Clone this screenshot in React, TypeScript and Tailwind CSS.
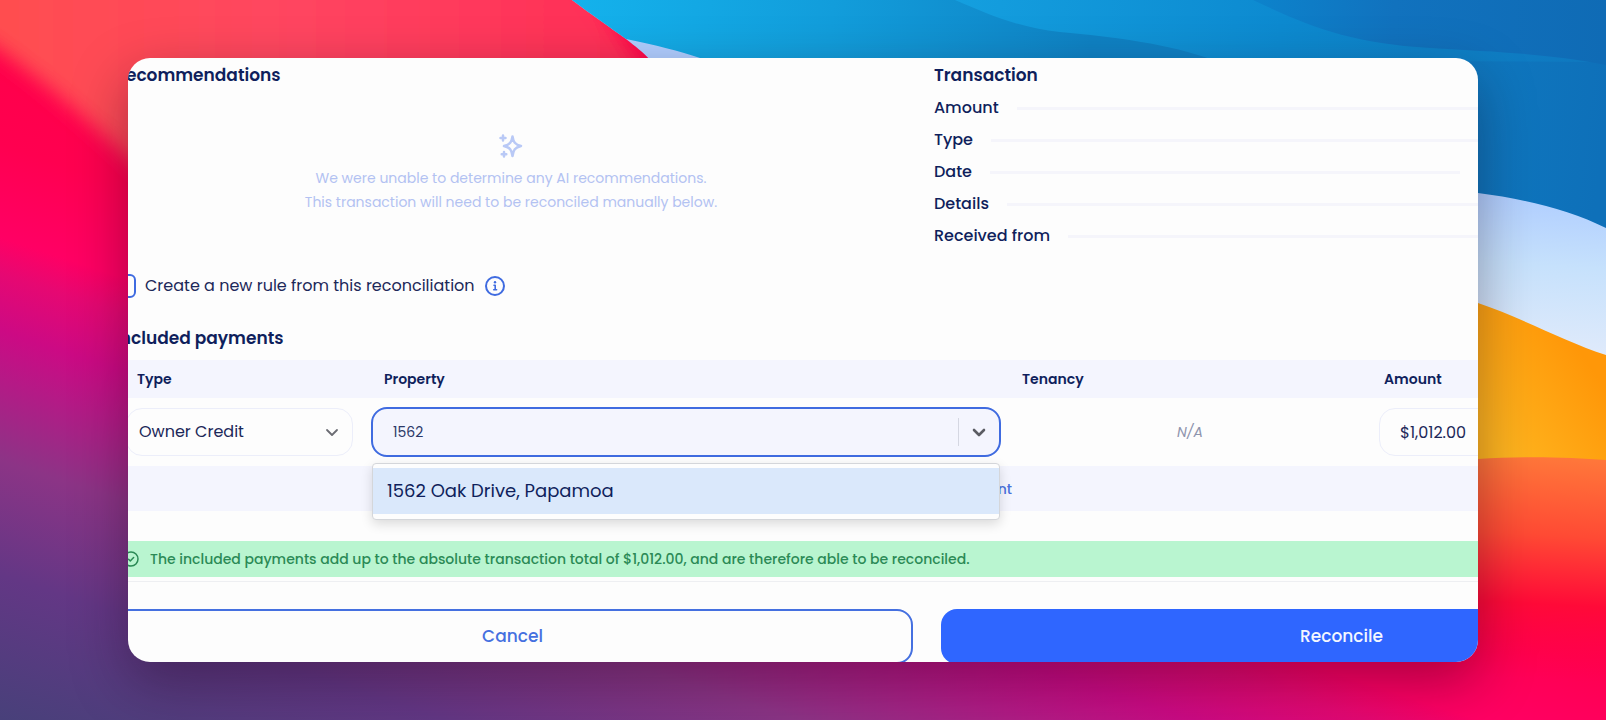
import { useState } from 'react'

const TRANSACTION_FIELDS = [
  { label: 'Amount', short: false },
  { label: 'Type', short: false },
  { label: 'Date', short: true },
  { label: 'Details', short: false },
  { label: 'Received from', short: false },
]

const PROPERTIES = ['1562 Oak Drive, Papamoa']

function Wallpaper() {
  return (
    <svg
      className="absolute inset-0 h-full w-full"
      viewBox="0 0 1606 720"
      preserveAspectRatio="none"
      aria-hidden="true"
    >
      <defs>
        <linearGradient id="base" gradientUnits="userSpaceOnUse" x1="0" y1="0" x2="-212" y2="650">
          <stop offset="0" stopColor="#ff0046" />
          <stop offset="0.2" stopColor="#ff0050" />
          <stop offset="0.33" stopColor="#ff0064" />
          <stop offset="0.38" stopColor="#e60872" />
          <stop offset="0.46" stopColor="#cc0a84" />
          <stop offset="0.53" stopColor="#b41a86" />
          <stop offset="0.64" stopColor="#8c3486" />
          <stop offset="0.8" stopColor="#633785" />
          <stop offset="1" stopColor="#48407a" />
        </linearGradient>
        <linearGradient id="coral" x1="0" y1="0" x2="1" y2="0">
          <stop offset="0" stopColor="#ff504c" />
          <stop offset="0.5" stopColor="#ff4560" />
          <stop offset="1" stopColor="#ff2c56" />
        </linearGradient>
        <linearGradient id="sea" gradientUnits="userSpaceOnUse" x1="572" y1="0" x2="1606" y2="120">
          <stop offset="0" stopColor="#14b2ec" />
          <stop offset="0.25" stopColor="#129ddb" />
          <stop offset="0.5" stopColor="#0f82c4" />
          <stop offset="0.8" stopColor="#0f7bc2" />
          <stop offset="1" stopColor="#0e70b9" />
        </linearGradient>
        <linearGradient id="wave" gradientUnits="userSpaceOnUse" x1="955" y1="0" x2="1606" y2="60">
          <stop offset="0" stopColor="#149fdf" />
          <stop offset="0.5" stopColor="#0d8ad0" />
          <stop offset="1" stopColor="#0f77be" />
        </linearGradient>
        <linearGradient id="deep" gradientUnits="userSpaceOnUse" x1="1253" y1="0" x2="1606" y2="20">
          <stop offset="0" stopColor="#0c83cc" />
          <stop offset="0.4" stopColor="#1172be" />
          <stop offset="1" stopColor="#0f6bb5" />
        </linearGradient>
        <linearGradient id="ice" gradientUnits="userSpaceOnUse" x1="1540" y1="195" x2="1530" y2="350">
          <stop offset="0" stopColor="#b0ceff" />
          <stop offset="0.45" stopColor="#c6e1fc" />
          <stop offset="1" stopColor="#dfeafb" />
        </linearGradient>
        <linearGradient id="amber" gradientUnits="userSpaceOnUse" x1="1500" y1="450" x2="1600" y2="380">
          <stop offset="0" stopColor="#ffb51f" />
          <stop offset="1" stopColor="#ff9708" />
        </linearGradient>
        <linearGradient id="ember" gradientUnits="userSpaceOnUse" x1="1560" y1="458" x2="1548" y2="680">
          <stop offset="0" stopColor="#ff773a" />
          <stop offset="0.35" stopColor="#ff4a34" />
          <stop offset="0.66" stopColor="#ff0a38" />
          <stop offset="1" stopColor="#ff0046" stopOpacity="0" />
        </linearGradient>
        <filter id="soft" x="-20%" y="-20%" width="140%" height="140%">
          <feGaussianBlur stdDeviation="10" />
        </filter>
      </defs>
      <rect width="1606" height="720" fill="url(#base)" />
      <path
        d="M-60 -60H560L650 80L400 400L200 232C170 196 90 116 0 50L-60 10Z"
        fill="url(#coral)"
        filter="url(#soft)"
      />
      <path d="M572 0C592 15 611 28 626 39C636 47 642 51 650 60V400H1606V0Z" fill="url(#ice)" />
      <path d="M572 0C592 15 611 28 626 39C655 45 680 51 700 58L1100 193H1478C1525 199 1570 210 1606 228V0Z" fill="url(#sea)" />
      <path d="M955 0C990 15 1020 28 1060 32C1115 37 1170 44 1213 60L1606 62V0Z" fill="url(#wave)" />
      <path d="M1253 0C1310 27 1350 43 1430 48C1500 52 1550 54 1606 65V0Z" fill="url(#deep)" />
      <path d="M1400 280L1478 303C1520 317 1565 342 1606 355V480H1400Z" fill="url(#amber)" />
      <path d="M1400 462L1478 459C1520 456 1570 457 1606 460V720H1400Z" fill="url(#ember)" />
    </svg>
  )
}

function Sparkles() {
  return (
    <svg className="size-6 text-[#b9c9f6]" viewBox="0 0 24 24" fill="none" stroke="currentColor" strokeWidth="2.5" strokeLinecap="round" strokeLinejoin="round" aria-hidden="true">
      <path d="M13.5 2.5C14.3 8 16 10.5 22 12C16 13.5 14.3 16 13.5 22C12.7 16 11 13.5 5 12C11 10.5 12.7 8 13.5 2.5Z" />
      <path d="M4 1.5V6.5M1.5 4H6.5M5 18V22.5M2.7 20.2H7.3" />
    </svg>
  )
}

function InfoIcon() {
  return (
    <svg className="size-5 text-[#3f6be0]" viewBox="0 0 20 20" fill="none" stroke="currentColor" strokeWidth="2" strokeLinecap="round" strokeLinejoin="round" aria-hidden="true">
      <circle cx="10" cy="10" r="9" />
      <path d="M9 9.3H10.2V13.8M8.7 13.8H11.6" strokeWidth="1.6" />
      <circle cx="10" cy="6.2" r="1.2" fill="currentColor" stroke="none" />
    </svg>
  )
}

function Chevron({ className }: { className: string }) {
  return (
    <svg className={className} viewBox="0 0 14 9" fill="none" stroke="currentColor" strokeLinecap="round" strokeLinejoin="round" aria-hidden="true">
      <path d="M2 2L7 7L12 2" />
    </svg>
  )
}

function CheckCircle() {
  return (
    <svg className="size-4 shrink-0" viewBox="0 0 16 16" fill="none" stroke="currentColor" strokeWidth="1.5" strokeLinecap="round" strokeLinejoin="round" aria-hidden="true">
      <circle cx="8" cy="8" r="7" />
      <path d="M5.5 8.2L7.3 9.9L10.6 6.5" />
    </svg>
  )
}

function PropertyPicker() {
  const [query, setQuery] = useState('1562')
  const matches = PROPERTIES.filter((p) => p.startsWith(query))

  return (
    <div className="relative">
      <div className="flex h-[50px] items-center rounded-2xl border-2 border-[#3f6be0] bg-[#f4f5fe]">
        <input
          aria-label="Property"
          role="combobox"
          aria-expanded="true"
          aria-controls="property-options"
          className="min-w-0 flex-1 bg-transparent pl-5 text-sm text-[#2b3868] outline-none"
          value={query}
          onChange={(e) => setQuery(e.target.value)}
        />
        <span className="h-7 w-px bg-[#d5d7e2]" />
        <button type="button" aria-label="Show properties" className="flex h-full w-10 items-center justify-center">
          <Chevron className="h-[9px] w-3.5 stroke-[2.6] text-[#5b5c63]" />
        </button>
      </div>
      <ul
        id="property-options"
        role="listbox"
        aria-label="Properties"
        className="absolute inset-x-px top-14 z-10 rounded border border-[#d4d6da] bg-[#fdfdfd] pt-1 pb-[5px] shadow-[0_4px_12px_rgba(0,0,0,0.14)]"
      >
        {matches.map((name) => (
          <li key={name} role="option" aria-selected="true" className="flex h-[46px] items-center bg-[#dae8fb] px-3.5 text-lg">
            {name}
          </li>
        ))}
      </ul>
    </div>
  )
}

function PaymentsTable() {
  return (
    <table className="mt-1.5 w-full table-fixed border-collapse">
      <colgroup>
        <col className="w-[250px]" />
        <col className="w-[648px]" />
        <col className="w-[360px]" />
        <col />
      </colgroup>
      <thead>
        <tr className="h-[38px] bg-[#f4f5fe] text-left text-sm">
          <th className="pl-[25px] font-semibold">Type</th>
          <th className="pl-[22px] font-semibold">Property</th>
          <th className="pl-3 font-semibold">Tenancy</th>
          <th className="pl-3.5 font-semibold">Amount</th>
        </tr>
      </thead>
      <tbody>
        <tr className="h-[68px]">
          <td className="pr-[9px] pl-3.5">
            <div className="relative">
              <select
                aria-label="Payment type"
                className="h-12 w-full appearance-none rounded-2xl border border-[#eceefa] bg-transparent px-3 text-base text-[#1c2859]"
              >
                <option>Owner Credit</option>
              </select>
              <Chevron className="pointer-events-none absolute top-5 right-3.5 h-[9px] w-3.5 stroke-[1.8] text-[#6b6c73]" />
            </div>
          </td>
          <td className="px-[9px]">
            <PropertyPicker />
          </td>
          <td className="text-center text-sm text-[#8e94ad] italic">N/A</td>
          <td className="px-[9px]">
            <input
              aria-label="Amount"
              className="h-12 w-full rounded-2xl border border-[#eceefa] bg-transparent px-5 text-base text-[#1c2859]"
              defaultValue="$1,012.00"
            />
          </td>
        </tr>
        <tr className="h-[45px] bg-[#f4f5fe]">
          <td colSpan={4} className="text-center">
            <button type="button" className="text-sm font-medium text-[#4a72dd]">
              + Add another payment
            </button>
          </td>
        </tr>
      </tbody>
    </table>
  )
}

export default function App() {
  return (
    <div className="relative min-h-screen overflow-hidden px-32 py-[58px] font-['Poppins','Inter',sans-serif] text-[#0f1f5c]">
      <Wallpaper />
      <main className="relative overflow-hidden rounded-[22px] bg-[#fdfdfd] shadow-[0_20px_56px_rgba(20,0,20,0.36)]">
        {/* the dialog is wider than its frame and runs off both sides */}
        <div className="-mr-[264px] -ml-4 pt-px">
          <div className="grid grid-cols-[79fr_80fr] gap-6">
            <section>
              <h2 className="pl-[3px] text-[17px] leading-8 font-semibold">Recommendations</h2>
              <div className="flex flex-col items-center pt-[43px] text-center text-sm leading-6 text-[#b3c2f2]">
                <Sparkles />
                <p className="mt-2">We were unable to determine any AI recommendations.</p>
                <p>This transaction will need to be reconciled manually below.</p>
              </div>
            </section>
            <section>
              <h2 className="text-[17px] leading-8 font-semibold">Transaction</h2>
              <dl className="pt-px">
                {TRANSACTION_FIELDS.map((field) => (
                  <div key={field.label} className="flex h-8 items-center gap-[18px] text-base font-medium">
                    <dt>{field.label}</dt>
                    <dd className={field.short ? 'mr-[282px] h-[3px] flex-1 bg-[#f5f5fb]' : 'h-[3px] flex-1 bg-[#f5f5fb]'} />
                  </div>
                ))}
              </dl>
            </section>
          </div>

          <div className="mt-[22px] flex h-6 items-center gap-2.5">
            <label className="flex items-center gap-[9px] text-base text-[#1c2859]">
              <input type="checkbox" className="size-6 appearance-none rounded-md border-2 border-[#3f6be0]" />
              Create a new rule from this reconciliation
            </label>
            <button type="button" aria-label="About rules">
              <InfoIcon />
            </button>
          </div>

          <h2 className="mt-6 pl-[3px] text-[17px] leading-8 font-semibold">Included payments</h2>
          <PaymentsTable />

          <p role="status" className="mt-[30px] flex h-9 items-center gap-[11px] bg-[#b9f5d0] pl-[11px] text-sm font-medium text-[#2b8a56]">
            <CheckCircle />
            The included payments add up to the absolute transaction total of $1,012.00, and are therefore able to be reconciled.
          </p>

          <footer className="mt-1 -mb-0.5 grid grid-cols-2 gap-7 border-t border-[#eeeff2] pt-[27px]">
            <button type="button" className="h-[55px] rounded-2xl border-2 border-[#4570e0] text-[17px] font-medium text-[#4570e0]">
              Cancel
            </button>
            <button type="button" className="h-[55px] rounded-2xl bg-[#2f66ff] text-[17px] font-medium text-[#f4f7ff]">
              Reconcile
            </button>
          </footer>
        </div>
      </main>
    </div>
  )
}
